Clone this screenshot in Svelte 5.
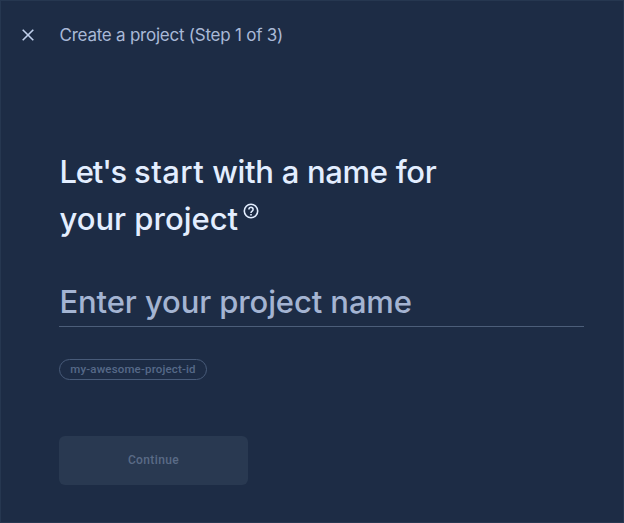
<script>
  let projectName = $state('');
</script>

<main class="page">
  <header>
    <button class="close" aria-label="Close">
      <svg width="12" height="12" viewBox="0 0 12 12"><path d="M.7.7l10.6 10.6M11.3.7L.7 11.3" /></svg>
    </button>
    <span class="step">Create a project (Step 1 of 3)</span>
  </header>
  <section>
    <h1>
      <span class="first"><span class="tight">Let's</span> <span class="loose">start</span> with a name for</span>
      <span class="second"><span class="words">your project</span><svg class="help" width="16" height="16" viewBox="0 0 16 16">
        <circle cx="8" cy="8" r="6.7" />
        <path d="M5.9 6.4a2.1 2.1 0 1 1 3.5 1.5C8.5 8.7 8 8.9 8 10" />
        <path d="M8 11v1.4" />
      </svg></span>
    </h1>
    <input aria-label="Project name" placeholder="Enter your project name" bind:value={projectName} />
    <div class="chip"><span>my-awesome-project-id</span></div>
    <button class="continue" disabled>Continue</button>
  </section>
</main>

<style>
  :global(body) { margin: 0; background: #1d2c45; }
  .page {
    box-sizing: border-box;
    width: 624px;
    height: 523px;
    border: 1px solid #263750;
    background: #1d2c45;
    color: #e3eeff;
    font-family: Inter, "Liberation Sans", sans-serif;
    overflow: hidden;
  }
  header { display: flex; align-items: center; height: 68px; padding-left: 21px; color: #a9b9d7; }
  button { border: 0; padding: 0; font: inherit; }
  .close { display: flex; width: 12px; height: 12px; background: none; color: #c0d0ec; }
  svg { fill: none; stroke: currentColor; }
  .close svg { stroke-width: 1.6; }
  .step { margin-left: 25.5px; font-size: 17px; line-height: 24px; letter-spacing: -0.24px; white-space: nowrap; }
  section { padding: 79px 39px 0 58px; }
  h1 { margin: 0; font-size: 31px; font-weight: 500; line-height: 47px; white-space: nowrap; }
  h1 > span { display: block; height: 47px; }
  h1 > .second { display: flex; }
  .first { padding-left: 0.5px; letter-spacing: -0.3px; }
  .tight { letter-spacing: -1.2px; }
  .loose { letter-spacing: 0.4px; }
  .words { padding-left: 0.5px; letter-spacing: 0; }
  .help { margin: 7.5px 0 0 4.5px; stroke-width: 1.6; }
  input {
    box-sizing: border-box;
    display: block;
    width: 525px;
    height: 50px;
    margin: 35px 0 0;
    padding: 0 0 0 0.5px;
    border: 0;
    border-bottom: 1px solid #4c5e79;
    border-radius: 0;
    outline: 0;
    background: none;
    color: #e3eeff;
    font: 500 31px/49px Inter, "Liberation Sans", sans-serif;
    letter-spacing: -0.11px;
  }
  input::placeholder { color: #a4b4d2; opacity: 1; }
  .chip {
    box-sizing: border-box;
    display: flex;
    align-items: center;
    justify-content: center;
    width: 148px;
    height: 21px;
    margin-top: 32px;
    border: 1px solid #485b79;
    border-radius: 11px;
    color: #566988;
    font: 500 11.5px/19px Roboto, sans-serif;
    letter-spacing: 0.16px;
    white-space: nowrap;
  }
  .continue {
    display: block;
    width: 189px;
    height: 49px;
    margin-top: 56px;
    border-radius: 6px;
    background: #293951;
    color: #5a6b86;
    font: 500 12px/49px Roboto, sans-serif;
    letter-spacing: 0.38px;
  }
</style>
